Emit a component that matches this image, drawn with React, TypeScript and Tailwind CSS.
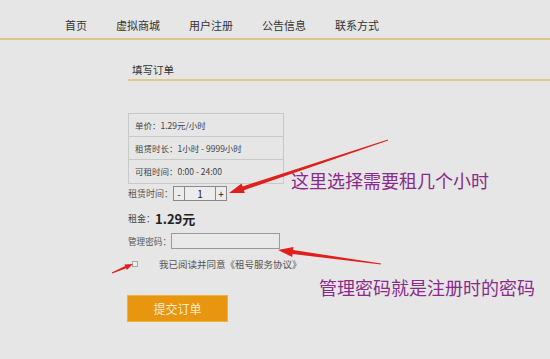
import React from "react";

type Pt = [number, number];

function arrowPoints(tail: Pt, tip: Pt, headLen: number, headW: number, shaftStart: number, shaftEnd: number): string {
  const dx = tip[0] - tail[0];
  const dy = tip[1] - tail[1];
  const len = Math.hypot(dx, dy);
  const ux = dx / len;
  const uy = dy / len;
  const nx = -uy;
  const ny = ux;
  const bx = tip[0] - ux * headLen;
  const by = tip[1] - uy * headLen;
  const pts: Pt[] = [
    [tail[0] + nx * shaftStart / 2, tail[1] + ny * shaftStart / 2],
    [bx + nx * shaftEnd / 2, by + ny * shaftEnd / 2],
    [bx + nx * headW / 2, by + ny * headW / 2],
    [tip[0], tip[1]],
    [bx - nx * headW / 2, by - ny * headW / 2],
    [bx - nx * shaftEnd / 2, by - ny * shaftEnd / 2],
    [tail[0] - nx * shaftStart / 2, tail[1] - ny * shaftStart / 2],
  ];
  return pts.map((p) => `${p[0].toFixed(1)},${p[1].toFixed(1)}`).join(" ");
}

const font = "font-['Noto_Sans_CJK_SC','Noto_Sans',sans-serif]";

export default function App() {
  const nav = ["首页", "虚拟商城", "用户注册", "公告信息", "联系方式"];
  return (
    <div className={`relative w-[550px] h-[359px] overflow-hidden bg-[#e6e6e6] ${font}`}>
      <div className="flex h-[38px] items-center gap-[29px] pl-[65px] pt-[12px] text-[11px] leading-[14px] text-[#333]">
        {nav.map((n) => (
          <span key={n}>{n}</span>
        ))}
      </div>
      <div className="h-[2px] bg-[#dcc48a]" />

      <div className="pl-[128px]">
        <div className="pl-[4px] pt-[23px] pb-[2px] text-[10.5px] leading-[14px] text-[#333]">填写订单</div>
        <div className="h-[2px] bg-[#ddca90]" />

        <div className="mt-[32px] w-[156px] border border-[#c9c9c9] text-[8.5px] text-[#444]">
          <div className="flex h-[23px] items-center border-b border-[#c9c9c9] pl-[6px]">单价：1.29元/小时</div>
          <div className="flex h-[23px] items-center border-b border-[#c9c9c9] pl-[6px]">租赁时长：1小时 - 9999小时</div>
          <div className="flex h-[23px] items-center pl-[6px]">可租时间：0:00 - 24:00</div>
        </div>

        <div className="mt-[2px] flex h-[15px] items-center text-[9px] text-[#555]">
          <span className="w-[45px] shrink-0 whitespace-nowrap">租赁时间：</span>
          <div className="flex h-[15px] border border-[#8a8a8a] bg-[#ececec] text-[10px] leading-none text-[#222]">
            <span className="flex w-[11px] items-center justify-center border-r border-[#8a8a8a]">-</span>
            <span className="flex w-[30px] items-center justify-center">1</span>
            <span className="flex w-[11px] items-center justify-center border-l border-[#8a8a8a]">+</span>
          </div>
        </div>

        <div className="mt-[9px] flex h-[18px] items-center text-[#444]">
          <span className="text-[9px]">租金：</span>
          <span className="text-[13px] font-bold text-[#222]">1.29元</span>
        </div>

        <div className="mt-[5px] flex h-[16px] items-center text-[8.6px] text-[#555]">
          <span className="w-[43px] shrink-0 whitespace-nowrap">管理密码：</span>
          <div className="h-[16px] w-[109px] border border-[#9a9a9a] bg-[#e9e9e9]" />
        </div>

        <div className="mt-[10px] flex h-[10px] items-center text-[9.5px] text-[#555]">
          <span className="ml-[4px] h-[6px] w-[6px] border border-[#aaa] bg-[#eee]" />
          <span className="ml-[21px] whitespace-nowrap">我已阅读并同意《租号服务协议》</span>
        </div>

        <button className="ml-[-1px] mt-[26px] flex h-[27px] w-[101px] items-center justify-center border border-[#f0b040] bg-[#e8950f] text-[12px] text-[#fdebd0]">
          提交订单
        </button>
      </div>

      <div className="absolute left-[291px] top-[170px] text-[18px] leading-[20px] text-[#8a2a8c]">这里选择需要租几个小时</div>
      <div className="absolute left-[319px] top-[277px] text-[18px] leading-[20px] text-[#8a2a8c]">管理密码就是注册时的密码</div>

      <svg className="pointer-events-none absolute left-0 top-0" width="550" height="359" viewBox="0 0 550 359">
        <polygon points={arrowPoints([388, 140], [229, 193], 15, 10, 0.8, 4)} fill="#e0201c" />
        <polygon points={arrowPoints([381, 264], [278, 250], 15, 10, 0.8, 4)} fill="#e0201c" />
        <polygon points={arrowPoints([112, 273], [133, 264], 8, 6, 1, 2.6)} fill="#e0201c" />
      </svg>
    </div>
  );
}
